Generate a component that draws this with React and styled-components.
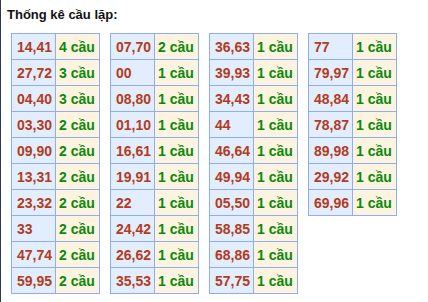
import React from "react";
import styled, { createGlobalStyle } from "styled-components";

const GlobalStyle = createGlobalStyle`
  html, body {
    margin: 0;
    padding: 0;
    background: #ffffff;
  }
`;

const Page = styled.div`
  width: 428px;
  height: 302px;
  box-sizing: border-box;
  border-left: 1px solid #2e3a55;
  padding: 6px 0 0 6px;
  font-family: "Liberation Sans", Arial, sans-serif;
`;

const Title = styled.h3`
  margin: 0 0 9px 0;
  font-size: 13px;
  line-height: 18px;
  font-weight: bold;
  color: #111111;
`;

const Tables = styled.div`
  display: flex;
  align-items: flex-start;
  gap: 10px;
  padding-left: 4px;
`;

const Table = styled.table`
  border-collapse: collapse;
  table-layout: fixed;
  width: 88px;
`;

const Cell = styled.td`
  border: 1px solid #8eaef0;
  height: 26px;
  padding: 0 0 0 ${props => (props.$count ? "3px" : "5px")};
  box-sizing: border-box;
  font-size: 14px;
  font-weight: bold;
  white-space: nowrap;
  overflow: hidden;
  vertical-align: middle;
  background: ${props => (props.$count ? "#fdf3e1" : "#e2eefd")};
  color: ${props => (props.$count ? "#0a8a0a" : "#b43b1c")};
`;

const columns = [
  [
    ["14,41", 4],
    ["27,72", 3],
    ["04,40", 3],
    ["03,30", 2],
    ["09,90", 2],
    ["13,31", 2],
    ["23,32", 2],
    ["33", 2],
    ["47,74", 2],
    ["59,95", 2],
  ],
  [
    ["07,70", 2],
    ["00", 1],
    ["08,80", 1],
    ["01,10", 1],
    ["16,61", 1],
    ["19,91", 1],
    ["22", 1],
    ["24,42", 1],
    ["26,62", 1],
    ["35,53", 1],
  ],
  [
    ["36,63", 1],
    ["39,93", 1],
    ["34,43", 1],
    ["44", 1],
    ["46,64", 1],
    ["49,94", 1],
    ["05,50", 1],
    ["58,85", 1],
    ["68,86", 1],
    ["57,75", 1],
  ],
  [
    ["77", 1],
    ["79,97", 1],
    ["48,84", 1],
    ["78,87", 1],
    ["89,98", 1],
    ["29,92", 1],
    ["69,96", 1],
  ],
];

export default function App() {
  return (
    <Page>
      <GlobalStyle />
      <Title>Thống kê cầu lặp:</Title>
      <Tables>
        {columns.map((rows, i) => (
          <Table key={i}>
            <colgroup>
              <col style={{ width: 44 }} />
              <col style={{ width: 44 }} />
            </colgroup>
            <tbody>
              {rows.map(([pair, n]) => (
                <tr key={pair}>
                  <Cell>{pair}</Cell>
                  <Cell $count>{n} cầu</Cell>
                </tr>
              ))}
            </tbody>
          </Table>
        ))}
      </Tables>
    </Page>
  );
}
